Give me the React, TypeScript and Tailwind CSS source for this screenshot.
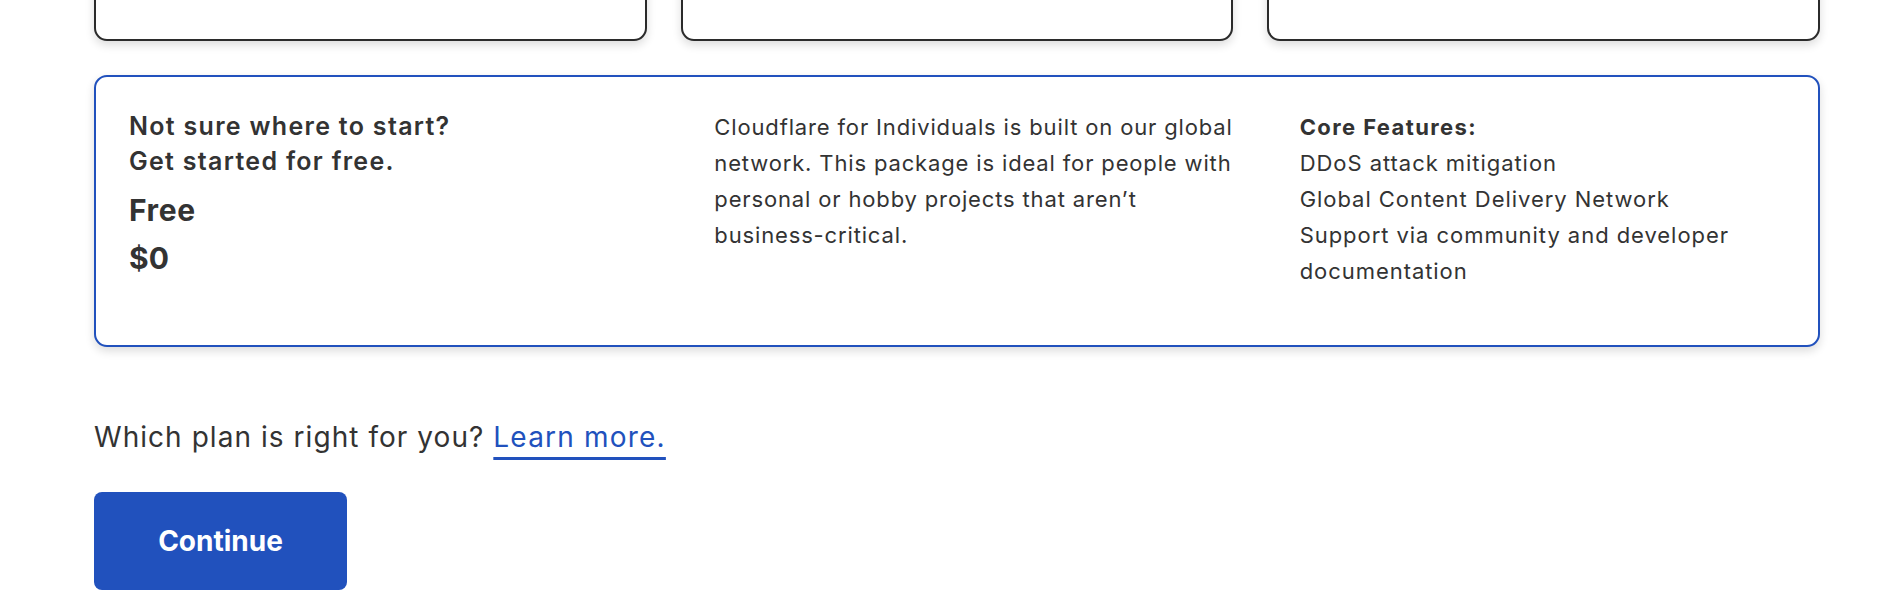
import React from 'react';

const FEATURES = [
  'DDoS attack mitigation',
  'Global Content Delivery Network',
  'Support via community and developer documentation',
];

export default function App() {
  return (
    <div className="min-h-screen bg-white text-[#333] overflow-hidden" style={{ fontFamily: 'Inter, "Noto Sans", sans-serif' }}>
      <div className="pl-[94px] w-[1820px] -mt-[259px]">
        {/* Plan cards (scrolled above) */}
        <div className="grid grid-cols-3 gap-[34px]">
          {[0, 1, 2].map(i => (
            <div key={i} className="h-[300px] bg-white border-2 border-[#2b2b2b] rounded-[13px] shadow-[0_4px_10px_rgba(0,0,0,0.14)]" />
          ))}
        </div>

        {/* Free plan */}
        <div className="mt-[34px] grid grid-cols-3 gap-[34px] border-2 border-[#2151bd] rounded-[13px] bg-white pt-[32px] pb-[56px] shadow-[0_4px_10px_rgba(0,0,0,0.14)]">
          <div className="pl-[33px]">
            <p className="text-[25px] leading-[35px] font-semibold tracking-[1.3px]">Not sure where to start?<br />Get started for free.</p>
            <p className="mt-[11px] text-[30px] leading-[40px] font-bold tracking-[0.6px]">Free</p>
            <p className="mt-[8px] text-[30px] leading-[40px] font-bold">$0</p>
          </div>
          <div className="pl-[33px]">
            <p className="text-[22px] leading-[36px] tracking-[0.85px] whitespace-nowrap">
              Cloudflare for Individuals is built on our global<br />
              network. This package is ideal for people with<br />
              personal or hobby projects that aren’t<br />
              business-critical.
            </p>
          </div>
          <div className="pl-[33px] pr-[10px] text-[22px] leading-[36px] tracking-[0.95px]">
            <p className="font-bold tracking-[1.4px]">Core Features:</p>
            {FEATURES.map(f => <p key={f}>{f}</p>)}
          </div>
        </div>

        <p className="mt-[70px] text-[28px] leading-[40px] tracking-[1.05px]">
          Which plan is right for you?{' '}
          <a href="#" className="text-[#2151bd] underline decoration-[3px] underline-offset-[10px] tracking-[1.2px]">Learn more.</a>
        </p>

        <button className="mt-[35px] w-[253px] h-[98px] bg-[#2151bd] rounded-[8px] text-white text-[28px] font-bold">
          Continue
        </button>
      </div>
    </div>
  );
}
